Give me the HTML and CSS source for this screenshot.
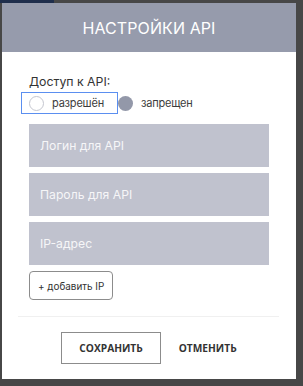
FILE: index.html
```html
<!DOCTYPE html>
<html>
<head>
	<title>Настройки API</title>
	<link rel="stylesheet" href="styles.css">
</head>
<body class="backdrop">
	<div class="modal">
		<div class="modal_header">
			<h1>Настройки API</h1>
		</div>

		<form class="modal_body">
			<div class="field_label">Доступ к API:</div>
			<div class="radio_row">
				<label class="radio focused">
					<span class="dot"></span>
					<span class="radio_text">разрешён</span>
				</label>
				<label class="radio">
					<span class="dot checked"></span>
					<span class="radio_text">запрещен</span>
				</label>
			</div>

			<div class="inputs">
				<input class="text_input" type="text" placeholder="Логин для API">
				<input class="text_input" type="password" placeholder="Пароль для API">
				<input class="text_input" type="text" placeholder="IP-адрес">
			</div>

			<button class="add_ip" type="button">+ добавить IP</button>
		</form>

		<div class="separator"></div>

		<div class="modal_footer">
			<button class="btn btn_save" type="button">Сохранить</button>
			<button class="btn btn_cancel" type="button">Отменить</button>
		</div>
	</div>
</body>
</html>
```

FILE: styles.css
```css
/* Backdrop */

html, body { margin: 0; padding: 0; }
.backdrop {
	background: linear-gradient(to right, #1f2e4c 0, #1f2e4c 54px, #474747 54px) no-repeat top left / 100% 3px, #474747;
	font-family: Inter, "Noto Sans", sans-serif;
	color: #333;
	overflow: hidden;
}

/* Modal */

.modal { width: 294px; margin: 3px 0 0 2px; background: #fff; }
.modal_header { height: 49px; display: flex; align-items: center; justify-content: center; background: #969bac; }
.modal_header h1 { margin: 0; font-size: 16px; font-weight: 400; color: #fff; text-transform: uppercase; letter-spacing: 0.1px; }

.modal_body { padding: 22px 27px 0; }
.field_label { font-size: 12.3px; line-height: 16px; color: #333; }

/* Radios */

.radio_row { display: flex; align-items: center; height: 22px; margin: 2px 0 0 -8px; }
.radio { display: flex; align-items: center; height: 22px; box-sizing: border-box; font-size: 11px; letter-spacing: -0.2px; color: #3c3c3c; }
.radio.focused { padding: 0 13px 0 7px; border: 1px solid #5b8ff0; }
.radio .dot { width: 15px; height: 15px; box-sizing: border-box; border-radius: 50%; border: 1px solid #c4c6cf; background: #fff; margin-right: 8px; }
.radio .dot.checked { border: 0; background: #9398a9; }

/* Inputs */

.inputs { display: flex; flex-direction: column; gap: 6px; margin-top: 10px; }
.text_input { height: 43px; width: 100%; box-sizing: border-box; margin: 0; padding: 0 11px; border: 0; background: #c0c2ce; font-family: Inter, "Noto Sans", sans-serif; font-size: 12.2px; color: #fff; outline: none; }
.text_input::placeholder { color: #f6f6f8; opacity: 1; }

.add_ip { display: block; height: 29px; margin-top: 6px; padding: 0 8px; background: #fff; border: 1px solid #8c8c8c; border-radius: 4px; font-family: Inter, "Noto Sans", sans-serif; font-size: 9.9px; color: #333; }

.separator { height: 1px; margin: 16px 17px 0 16px; background: #f0f0f0; }

/* Footer */

.modal_footer { display: flex; justify-content: center; gap: 18px; padding: 15px 0; }
.btn { height: 32px; margin: 0; background: #fff; font-family: "Open Sans", sans-serif; font-size: 10.2px; font-weight: 700; color: #333; text-transform: uppercase; }
.btn_save { padding: 0 17px; border: 1px solid #8c8c8c; }
.btn_cancel { padding: 0; border: 0; }
```
